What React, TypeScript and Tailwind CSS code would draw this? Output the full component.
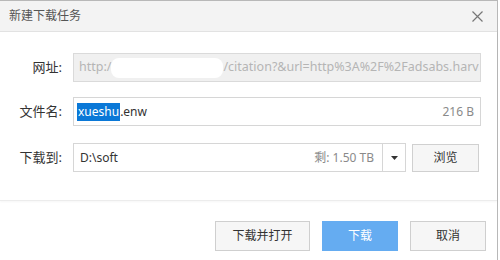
import React from "react";

const font = { fontFamily: '"Noto Sans", "Noto Sans CJK SC", sans-serif' };

export default function App() {
  return (
    <div className="w-[500px] h-[260px] bg-white relative overflow-hidden text-[13px] text-[#333]" style={font}>
      <div className="w-[498px] h-[260px] border-t border-r border-[#b8b8b8] flex flex-col">
        <div className="h-[31px] bg-[#f3f3f3] border-b border-[#e2e2e2] flex items-center justify-between pl-[9px] pr-[12px] shrink-0">
          <span className="text-[12px] text-[#555]">新建下载任务</span>
          <svg width="11" height="11" viewBox="0 0 11 11" className="mr-[2px]">
            <path d="M0.5 0.5 L10.5 10.5 M10.5 0.5 L0.5 10.5" stroke="#777" strokeWidth="1.2" />
          </svg>
        </div>
        <div className="flex flex-col pt-[21px] h-[169px] border-b border-[#ececec] shadow-[0_1px_2px_rgba(0,0,0,0.04)]">
          <div className="flex items-center h-[29px]">
            <div className="w-[63px] text-right pr-[1px] text-[13px]">网址:</div>
            <div className="ml-[10px] w-[408px] h-[29px] bg-[#f0f0f0] border border-[#dadada] flex items-center pl-[5px] text-[#b5b5b5] text-[12.5px] overflow-hidden whitespace-nowrap relative">
              <span>http:/</span>
              <span className="inline-block w-[112px] h-[20px] bg-white rounded-[8px]" />
              <span>/citation?&amp;url=http%3A%2F%2Fadsabs.harv</span>
            </div>
          </div>
          <div className="flex items-center h-[29px] mt-[15px]">
            <div className="w-[63px] text-right pr-[1px]">文件名:</div>
            <div className="ml-[10px] w-[408px] h-[29px] bg-white border border-[#d6d6d6] flex items-center pl-[3px] pr-[6px] whitespace-nowrap text-[12px]">
              <span className="bg-[#0a78d7] text-white leading-[18px] px-[1px]">xueshu</span>
              <span>.enw</span>
              <span className="ml-auto text-[#8a8a8a] text-[12px]">216 B</span>
            </div>
          </div>
          <div className="flex items-center h-[29px] mt-[17px]">
            <div className="w-[63px] text-right pr-[1px]">下载到:</div>
            <div className="ml-[10px] w-[333px] h-[29px] bg-white border border-[#d6d6d6] flex items-center whitespace-nowrap text-[12px]">
              <span className="pl-[6px]">D:\soft</span>
              <span className="ml-auto pr-[8px] text-[#8a8a8a] text-[12px]">剩: 1.50 TB</span>
              <div className="w-[23px] h-full border-l border-[#d6d6d6] flex items-center justify-center">
                <svg width="7" height="4" viewBox="0 0 7 4"><path d="M0 0 L7 0 L3.5 4 Z" fill="#333" /></svg>
              </div>
            </div>
            <button className="ml-[6px] w-[67px] h-[28px] bg-[#f6f6f6] border border-[#d0d0d0] text-[12px] text-[#333]">浏览</button>
          </div>
        </div>
        <div className="flex-1 flex items-start justify-end pt-[20px] pr-[11px] gap-[12px]">
          <button className="w-[95px] h-[30px] bg-[#f6f6f6] border border-[#cfcfcf] text-[12px] text-[#333]">下载并打开</button>
          <button className="w-[76px] h-[30px] bg-[#65acf1] text-[12px] text-white">下载</button>
          <button className="w-[76px] h-[30px] bg-[#f6f6f6] border border-[#cfcfcf] text-[12px] text-[#333]">取消</button>
        </div>
      </div>
    </div>
  );
}
